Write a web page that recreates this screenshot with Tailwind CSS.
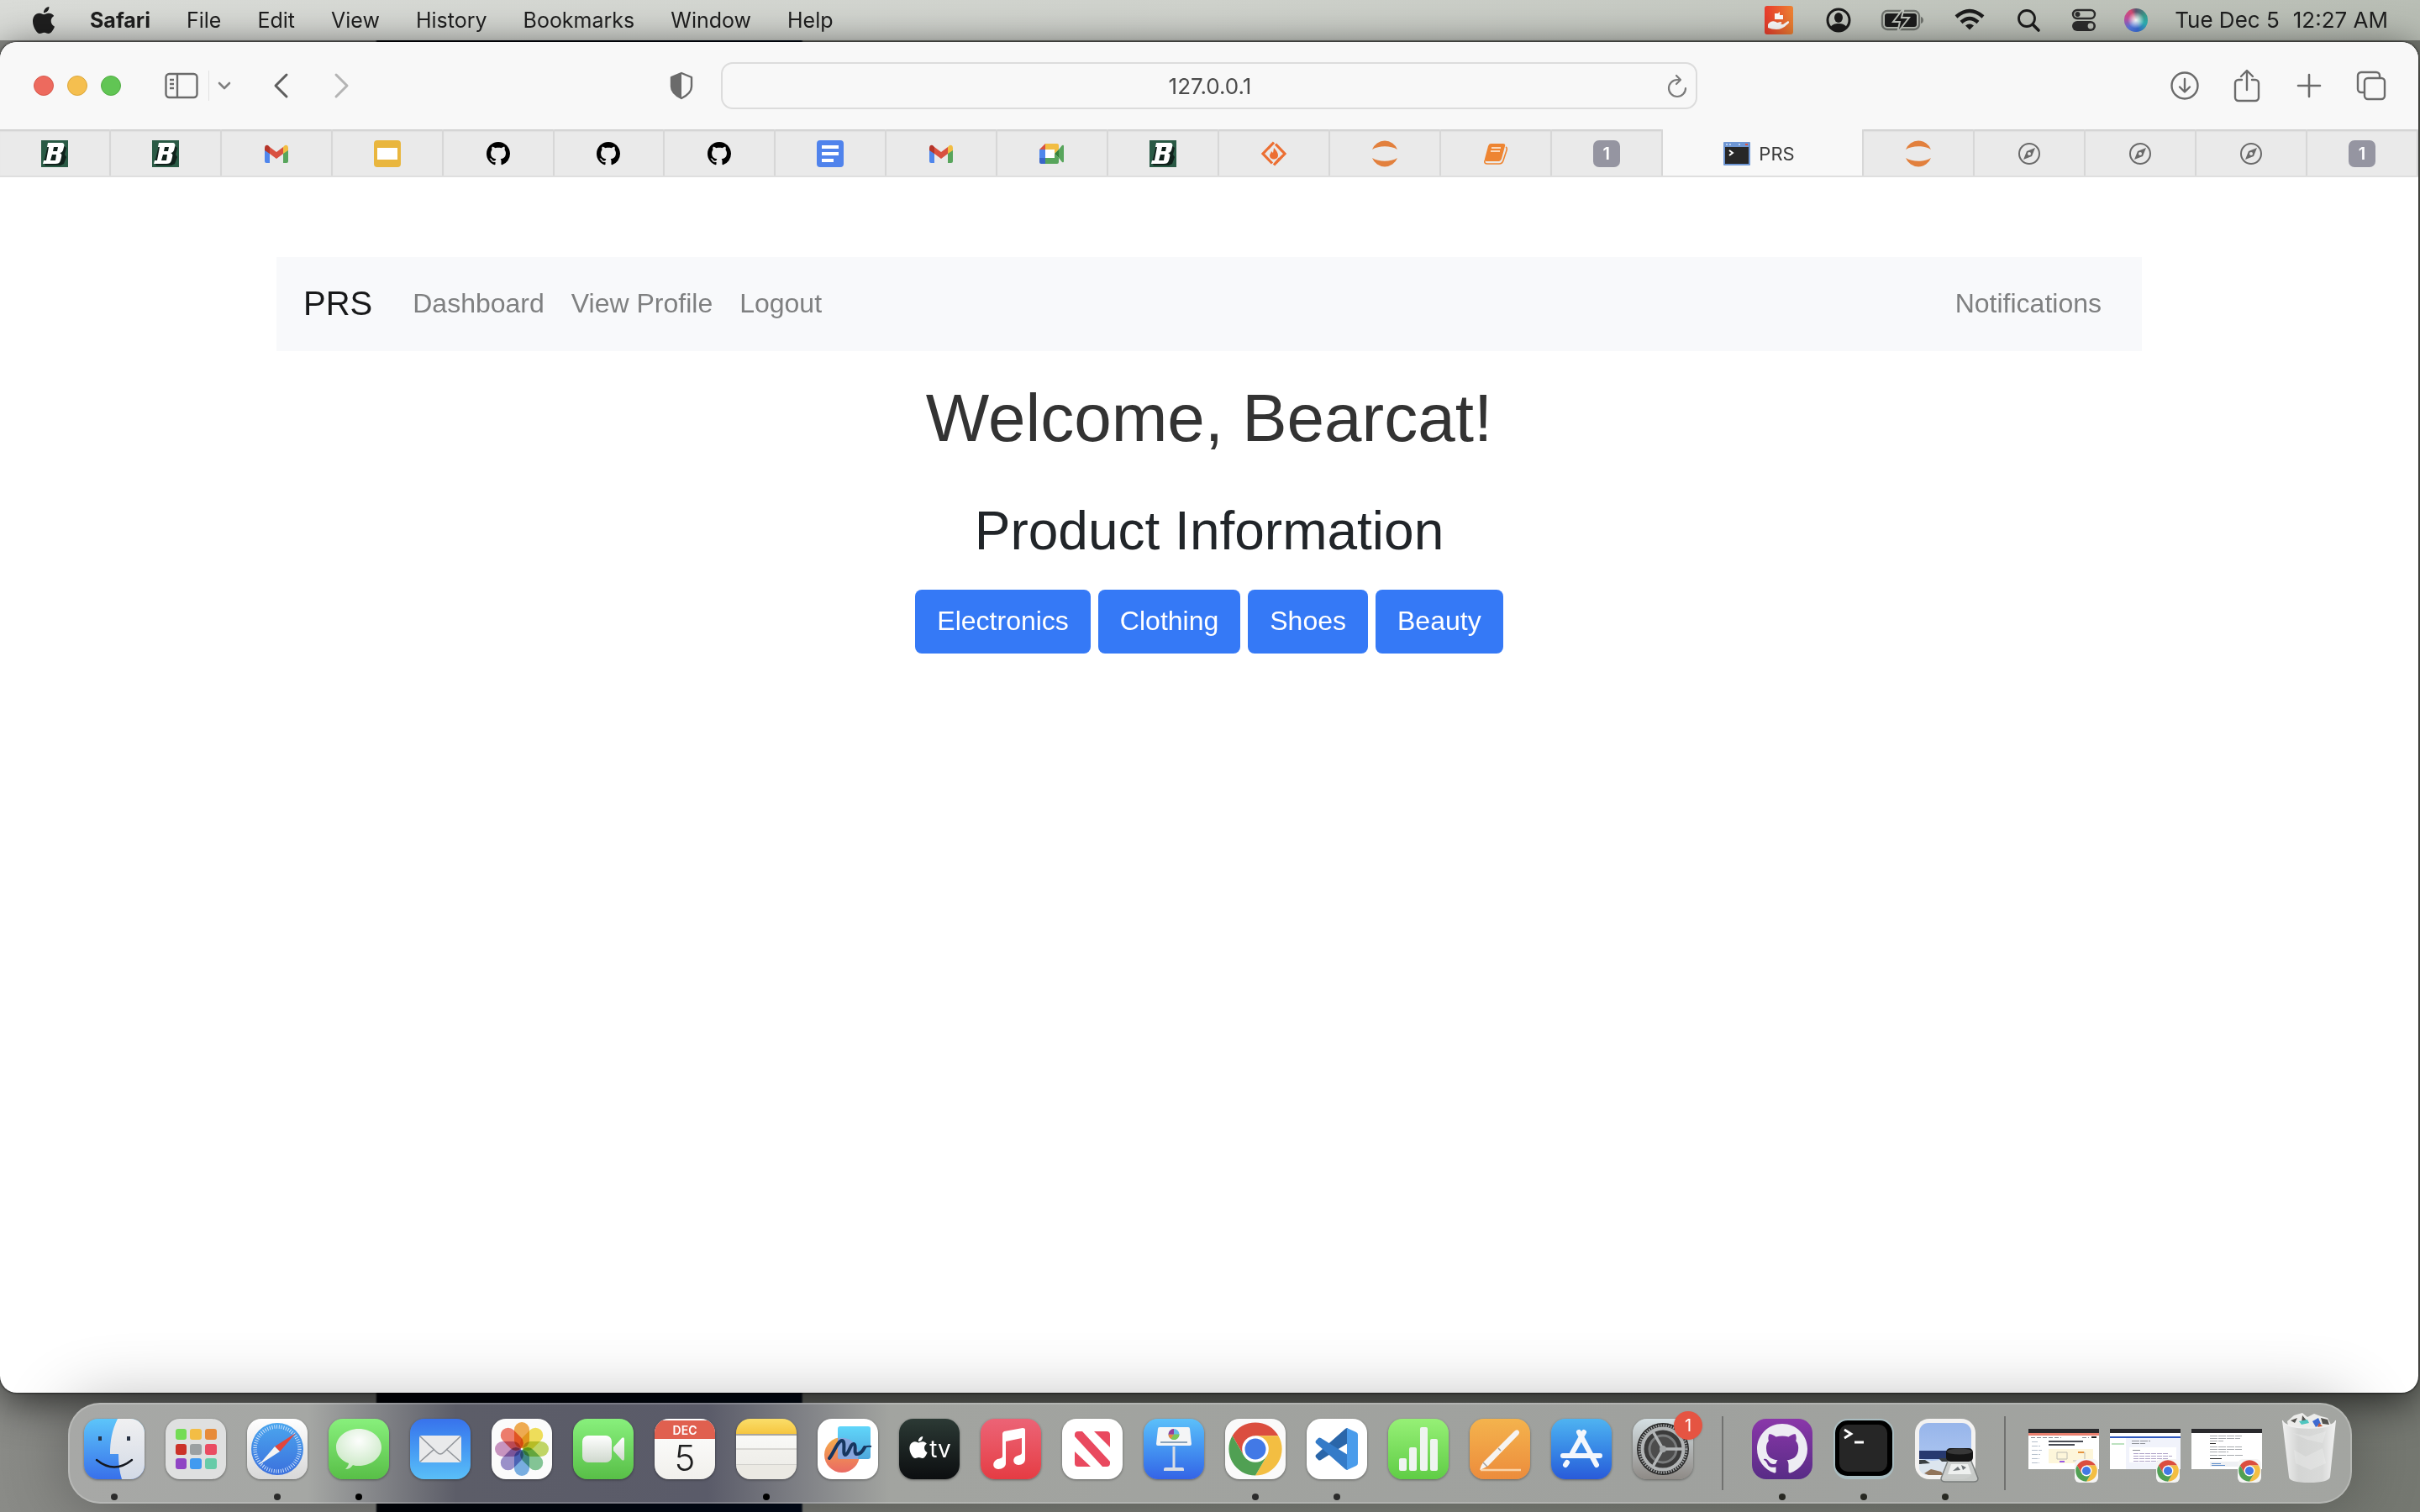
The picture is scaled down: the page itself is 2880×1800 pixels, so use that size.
<!DOCTYPE html>
<html lang="en">
<head>
<meta charset="utf-8">
<title>PRS</title>
<script src="https://cdn.jsdelivr.net/npm/@tailwindcss/browser@4"></script>
</head>
<body class="min-h-screen flex flex-col overflow-hidden bg-[linear-gradient(90deg,#8a8b87_0,#7b7c79_15.5%,#020409_15.6%,#020a18_33.1%,#777973_33.2%,#7d8079_60%,#757871_100%)] font-[Inter,sans-serif] text-[#1f1f1f]">

<svg class="absolute size-0" aria-hidden="true">
  <defs>
    <linearGradient id="gFinder" x1="0" y1="0" x2="0" y2="1"><stop offset="0" stop-color="#5cc5fa"/><stop offset="1" stop-color="#3870ea"/></linearGradient>
    <linearGradient id="gFace" x1="0" y1="0" x2="0" y2="1"><stop offset="0" stop-color="#f0f0f1"/><stop offset="1" stop-color="#d3dae6"/></linearGradient>
    <linearGradient id="gWhite" x1="0" y1="0" x2="0" y2="1"><stop offset="0" stop-color="#ffffff"/><stop offset="1" stop-color="#cfd8cd"/></linearGradient>
    <radialGradient id="gBubble" cx=".5" cy=".3" r=".75"><stop offset="0" stop-color="#fdfefd"/><stop offset="1" stop-color="#c5e6bf"/></radialGradient>
    <linearGradient id="gSafari" x1="0" y1="0" x2="0" y2="1"><stop offset="0" stop-color="#4ba6ee"/><stop offset="1" stop-color="#3b70dd"/></linearGradient>
    <linearGradient id="gSky" x1="0" y1="0" x2="0" y2="1"><stop offset="0" stop-color="#97b5ea"/><stop offset="1" stop-color="#b3cbf3"/></linearGradient>
    <linearGradient id="gOrange" x1="0" y1="0" x2="0" y2="1"><stop offset="0" stop-color="#f5ae4b"/><stop offset="1" stop-color="#ea6a63"/></linearGradient>
    <linearGradient id="gCyan" x1="0" y1="0" x2="0" y2="1"><stop offset="0" stop-color="#60d6fa"/><stop offset="1" stop-color="#4ea7dc"/></linearGradient>
    <linearGradient id="gRec" x1="0" y1="0" x2="1" y2="0"><stop offset="0" stop-color="#ea3b2d"/><stop offset="1" stop-color="#ef8333"/></linearGradient>
    <linearGradient id="gBin" x1="0" y1="0" x2="1" y2="0"><stop offset="0" stop-color="#f1f1f1"/><stop offset=".3" stop-color="#d4d5d4"/><stop offset=".75" stop-color="#d9dad9"/><stop offset="1" stop-color="#f3f3f3"/></linearGradient>
    <symbol id="apple" viewBox="0 0 24 24"><path d="M12.152 6.896c-.948 0-2.415-1.078-3.96-1.04-2.04.027-3.91 1.183-4.961 3.014-2.117 3.675-.546 9.103 1.519 12.09 1.013 1.454 2.208 3.09 3.792 3.039 1.52-.065 2.09-.987 3.935-.987 1.831 0 2.35.987 3.96.948 1.637-.026 2.676-1.48 3.676-2.948 1.156-1.688 1.636-3.325 1.662-3.415-.039-.013-3.182-1.221-3.22-4.857-.026-3.04 2.48-4.494 2.597-4.559-1.429-2.09-3.623-2.324-4.39-2.376-2-.156-3.675 1.09-4.61 1.09zM15.53 3.83c.843-1.012 1.4-2.427 1.245-3.83-1.207.052-2.662.805-3.532 1.818-.78.896-1.454 2.338-1.273 3.714 1.338.104 2.715-.688 3.559-1.701"/></symbol>
    <symbol id="github" viewBox="0 0 16 16"><path d="M8 0C3.58 0 0 3.58 0 8c0 3.54 2.29 6.53 5.47 7.59.4.07.55-.17.55-.38 0-.19-.01-.82-.01-1.49-2.01.37-2.53-.49-2.69-.94-.09-.23-.48-.94-.82-1.13-.28-.15-.68-.52-.01-.53.63-.01 1.08.58 1.23.82.72 1.21 1.87.87 2.33.66.07-.52.28-.87.51-1.07-1.78-.2-3.64-.89-3.64-3.95 0-.87.31-1.59.82-2.15-.08-.2-.36-1.02.08-2.12 0 0 .67-.21 2.2.82.64-.18 1.32-.27 2-.27s1.36.09 2 .27c1.53-1.04 2.2-.82 2.2-.82.44 1.1.16 1.92.08 2.12.51.56.82 1.27.82 2.15 0 3.07-1.87 3.75-3.65 3.95.29.25.54.73.54 1.48 0 1.07-.01 1.93-.01 2.2 0 .21.15.46.55.38A8.01 8.01 0 0 0 16 8c0-4.42-3.58-8-8-8z"/></symbol>
    <symbol id="chrome" viewBox="0 0 48 48">
      <path fill="#db4e3f" d="M24 13H43.05A22 22 0 0 0 4.95 13L14.47 29.5L24 24Z"/>
      <path fill="#f3be42" transform="rotate(120 24 24)" d="M24 13H43.05A22 22 0 0 0 4.95 13L14.47 29.5L24 24Z"/>
      <path fill="#50a053" transform="rotate(240 24 24)" d="M24 13H43.05A22 22 0 0 0 4.95 13L14.47 29.5L24 24Z"/>
      <circle cx="24" cy="24" r="11" fill="#fff"/><circle cx="24" cy="24" r="8.7" fill="#4279e6"/>
    </symbol>
    <symbol id="bearcat" viewBox="0 0 32 32"><rect width="32" height="32" fill="#2a5a45"/><path fill="#10211b" d="M8 6h18l4 3-2 8 2 3-3 8-4 2H5l-2-3z"/><path fill="#fff" fill-rule="evenodd" d="M8 3h16c3 0 4 2 3 5l-1 4c-1 2-2 3-4 3 2 1 3 2 2 5l-1 4c-1 3-3 4-6 4H2l1-4h3L9 8H7zm7 5-1 5h5l1-5zm-2 9-2 7h6l1-7z"/></symbol>
    <symbol id="gmail" viewBox="0 0 32 32"><path fill="#4f86ec" d="M2 9v16q0 2 2 2h4V14z"/><path fill="#58a55c" d="M30 9v16q0 2-2 2h-4V14z"/><path fill="#b5352a" d="M2 10q0-5 4-4l2 2v8l-6-4z"/><path fill="#f2bd42" d="M30 10q0-5-4-4l-2 2v8l6-4z"/><path fill="#d95140" d="M8 8l8 6 8-6v8l-8 6-8-6z"/></symbol>
    <symbol id="jupyter" viewBox="0 0 32 32"><path fill="#e2803d" d="M1 11a16 16 0 0 1 30 0C23 6 9 6 1 11zM1 21a16 16 0 0 0 30 0C23 26 9 26 1 21z"/></symbol>
    <symbol id="compass" viewBox="0 0 32 32"><circle cx="16" cy="16" r="12" fill="none" stroke="#6a6a6a" stroke-width="2"/><path fill="#6a6a6a" fill-rule="evenodd" d="M23 9l-4 10-10 4 4-10zm-7 5a2 2 0 1 0 0 4 2 2 0 0 0 0-4z"/></symbol>
  </defs>
</svg>

<header class="h-12 shrink-0 flex items-center justify-between bg-linear-to-r from-[#dadcd8] via-[#cfd2cc] to-[#b9beb5] pl-9 pr-[38px] text-[25px] leading-[46px]">
  <nav class="flex items-center gap-[43px]" aria-label="Menu bar">
    <button aria-label="Apple menu" class="-mr-1"><svg class="size-8" fill="#1f1f1f"><use href="#apple"/></svg></button>
    <button class="font-bold">Safari</button>
    <button>File</button><button>Edit</button><button>View</button><button>History</button><button>Bookmarks</button><button>Window</button><button>Help</button>
  </nav>
  <div class="flex items-center text-[26px]">
    <svg class="w-[34px] h-[34px] mr-[38px]" viewBox="0 0 34 34"><rect width="34" height="34" rx="3" fill="url(#gRec)"/><path fill="#fff" d="M12 9h4l2-2v4h4v5H12zM4 22c4-5 8-4 11-2l4-1c2 0 2 3-1 3h4l6-4c2 1 1 3-1 4-4 4-8 6-13 6-4 0-7-1-10-2z"/></svg>
    <svg class="size-8 mr-[34px]" viewBox="0 0 32 32"><circle cx="16" cy="16" r="13" fill="none" stroke="#1c1c1c" stroke-width="3"/><ellipse cx="16" cy="13" rx="5" ry="6" fill="#1c1c1c"/><path fill="#1c1c1c" d="M6 25c2-4 6-5 10-5s8 1 10 5c-5 5-15 5-20 0z"/></svg>
    <svg class="w-[52px] h-8 mr-[36px]" viewBox="0 0 52 32"><rect x="2" y="5" width="44" height="22" rx="6" fill="none" stroke="#70736e" stroke-width="2.4"/><path fill="#70736e" d="M48 12c4 1 4 7 0 8z"/><rect x="5" y="8" width="38" height="16" rx="3" fill="#1c1c1c"/><path fill="#1c1c1c" stroke="#c2c6bf" stroke-width="2" d="M28 1L15 18h8l-3 13 14-18h-9z"/></svg>
    <svg class="w-[36px] h-8 mr-[36px]" viewBox="0 0 36 32" fill="none" stroke="#1c1c1c" stroke-width="4.4"><path d="M2 12q16-14 32 0M8 18.500q10-9 20 0"/><path d="M18 27.500l-5-5q5-4 10 0z" fill="#1c1c1c" stroke="none"/></svg>
    <svg class="size-8 mr-[34px]" viewBox="0 0 32 32" fill="none" stroke="#1c1c1c" stroke-width="2.800" stroke-linecap="round"><circle cx="14" cy="14" r="9.500"/><path d="M21 21l7 7" stroke-width="3.600"/></svg>
    <svg class="size-8 mr-[32px]" viewBox="0 0 32 32"><rect x="3" y="4" width="26" height="10" rx="5" fill="none" stroke="#2d2d2d" stroke-width="2.400"/><circle cx="8.500" cy="9" r="3" fill="#2d2d2d"/><rect x="2" y="17" width="28" height="12" rx="6" fill="#2d2d2d"/><circle cx="24" cy="23" r="3.400" fill="#c0c4bc"/></svg>
    <span class="size-[28px] rounded-full mr-[32px] bg-[radial-gradient(circle_at_50%_50%,#fff_0,#ffffff99_22%,transparent_50%),conic-gradient(#5a5670,#3a9c8c_60deg,#2fb5b8_110deg,#3b6fdc_170deg,#5a7ce8_220deg,#c34fa0_280deg,#d44b73_330deg,#5a5670)]"></span>
    <span class="mr-4">Tue Dec 5</span><time>12:27 AM</time>
  </div>
</header>

<div class="flex-1 flex flex-col mt-[2px] mr-[2px] rounded-[20px] overflow-hidden bg-white shadow-[0_0_3px_#000,0_10px_50px_rgba(0,0,0,0.7)]">
  <div class="h-[104px] shrink-0 grid grid-cols-[1fr_1162px_1fr] items-center bg-[#f8f8f8]">
    <div class="flex items-center pl-10 pr-8">
      <div class="flex gap-4 mr-16">
        <button aria-label="Close" class="size-6 rounded-full bg-[#ed6a5e] border border-[#d8594d]"></button>
        <button aria-label="Minimise" class="size-6 rounded-full bg-[#f5bf4f] border border-[#dca73c]"></button>
        <button aria-label="Zoom" class="size-6 rounded-full bg-[#61c554] border border-[#51ad43]"></button>
      </div>
      <button aria-label="Sidebar" class="-ml-3 mr-3"><svg class="w-10 h-8" viewBox="0 0 40 32" fill="none" stroke="#6b6b6b" stroke-width="2.400"><rect x="1.500" y="2" width="37" height="28" rx="4"/><path d="M15 2v28M6 9h5M6 14h5M6 19h5"/></svg></button>
      <span class="w-px h-9 bg-[#e2e2e2] mr-[10px]"></span>
      <button aria-label="Tab groups" class="mr-12"><svg class="w-4 h-4" viewBox="0 0 16 16" fill="none" stroke="#808080" stroke-width="2.600" stroke-linecap="round" stroke-linejoin="round"><path d="M2 5l6 6 6-6"/></svg></button>
      <button aria-label="Back" class="mr-12"><svg class="w-6 h-8" viewBox="0 0 24 32" fill="none" stroke="#5e5e5e" stroke-width="3" stroke-linecap="round" stroke-linejoin="round"><path d="M18 3L5 16l13 13"/></svg></button>
      <button aria-label="Forward"><svg class="w-6 h-8" viewBox="0 0 24 32" fill="none" stroke="#b4b4b4" stroke-width="3" stroke-linecap="round" stroke-linejoin="round"><path d="M5 3l13 13L5 29"/></svg></button>
      <button aria-label="Privacy report" class="ml-auto"><svg class="w-[30px] h-9" viewBox="0 0 30 36"><path fill="none" stroke="#6b6b6b" stroke-width="2.400" stroke-linejoin="round" d="M15 3l12 5v11c0 6-6 11-12 14C9 30 3 25 3 19V8z"/><path fill="#6b6b6b" d="M15 3v30C9 30 3 25 3 19V8z"/></svg></button>
    </div>
    <div class="h-14 flex items-center rounded-[14px] border-2 border-[#dcdcdc] pt-px pl-10 pr-1.5">
      <input aria-label="Address" value="127.0.0.1" class="flex-1 min-w-0 bg-transparent text-center text-[26px] text-[#4a4a4a]">
      <button aria-label="Reload"><svg class="w-8 h-8" viewBox="0 0 32 32" fill="none" stroke="#7a7a7a" stroke-width="2.200" stroke-linecap="round" stroke-linejoin="round"><path d="M19 8h-3a10 10 0 1 0 10 10M15 3l5 5-5 5"/></svg></button>
    </div>
    <div class="flex items-center justify-end gap-[38px] pr-[38px]">
      <button aria-label="Downloads"><svg class="size-9" viewBox="0 0 36 36" fill="none" stroke="#6b6b6b" stroke-width="2.400" stroke-linecap="round" stroke-linejoin="round"><circle cx="18" cy="18" r="15.500"/><path d="M18 10v15M12 19.500l6 6 6-6"/></svg></button>
      <button aria-label="Share"><svg class="w-9 h-10" viewBox="0 0 36 40" fill="none" stroke="#6b6b6b" stroke-width="2.400" stroke-linecap="round" stroke-linejoin="round"><path d="M12 13H8a4 4 0 0 0-4 4v17a4 4 0 0 0 4 4h20a4 4 0 0 0 4-4V17a4 4 0 0 0-4-4h-4M18 25V3M11 9l7-7 7 7"/></svg></button>
      <button aria-label="New tab"><svg class="size-9" viewBox="0 0 36 36" fill="none" stroke="#6b6b6b" stroke-width="2.600" stroke-linecap="round"><path d="M18 5v26M5 18h26"/></svg></button>
      <button aria-label="Tab overview"><svg class="size-9" viewBox="0 0 36 36" fill="none" stroke="#6b6b6b" stroke-width="2.400" stroke-linejoin="round"><path d="M10 26H6a4 4 0 0 1-4-4V6a4 4 0 0 1 4-4h18a4 4 0 0 1 4 4v3"/><rect x="10" y="9" width="24" height="25" rx="4"/></svg></button>
    </div>
  </div>

  <nav aria-label="Tabs" class="h-[57px] shrink-0 grid grid-cols-[repeat(15,minmax(0,132fr))_minmax(0,240fr)_repeat(5,minmax(0,132fr))] border-b-2 border-[#dfdfdf] bg-[#eaeaea] [&>a]:flex [&>a]:items-center [&>a]:justify-center [&>a]:pt-[3px] [&>a]:border-r-2 [&>a]:border-[#d7d7d7] [&>a:not([aria-current])]:shadow-[inset_0_3px_2px_-1px_#cfcfcf]">
    <a href="#" aria-label="Bearcat"><svg class="size-8"><use href="#bearcat"/></svg></a>
    <a href="#" aria-label="Bearcat"><svg class="size-8"><use href="#bearcat"/></svg></a>
    <a href="#" aria-label="Gmail"><svg class="size-8"><use href="#gmail"/></svg></a>
    <a href="#" aria-label="Slides"><svg class="size-8" viewBox="0 0 32 32"><rect width="32" height="32" rx="4" fill="#e9b63e"/><rect x="4" y="9" width="24" height="14" fill="#fff"/></svg></a>
    <a href="#" aria-label="GitHub"><svg class="size-7"><use href="#github"/></svg></a>
    <a href="#" aria-label="GitHub"><svg class="size-7"><use href="#github"/></svg></a>
    <a href="#" aria-label="GitHub"><svg class="size-7"><use href="#github"/></svg></a>
    <a href="#" aria-label="Docs"><svg class="size-8" viewBox="0 0 32 32"><rect width="32" height="32" rx="4" fill="#5083ec"/><path fill="#fff" d="M6 6h20v4H6zM6 14h20v4H6zM6 22h14v4H6z"/></svg></a>
    <a href="#" aria-label="Gmail"><svg class="size-8"><use href="#gmail"/></svg></a>
    <a href="#" aria-label="Meet"><svg class="size-8" viewBox="0 0 32 32"><path fill="#fff" d="M8 11h11v10H8z"/><path fill="#f2bd42" d="M8 4h14q2 0 2 2v5l-5 5v-5H8z"/><path fill="#d95140" d="M8 4v7H1z"/><path fill="#4f86ec" d="M1 11h7v10H1z"/><path fill="#3a66c8" d="M1 21h7v7H3q-2 0-2-2z"/><path fill="#58a55c" d="M8 21h11v-5l5 5v5q0 2-2 2H8zM24 11l4-5q2-1 2 1v18q0 2-2 1l-4-5z"/><path fill="#36803a" d="M19 16l5-5v10z"/></svg></a>
    <a href="#" aria-label="Bearcat"><svg class="size-8"><use href="#bearcat"/></svg></a>
    <a href="#" aria-label="Diamond"><svg class="size-8" viewBox="0 0 32 32"><path fill="none" stroke="#ec6f33" stroke-width="3.200" d="M14 4.500L3 16l11 11.500M18 4.500L29 16 18 27.500M16 2.500L9 10M16 29.500l7-8"/><path fill="#ec6f33" d="M16 9c4 4 5 7 5 9 0 6-10 6-10 0 0-2 2-3 2-5l2 2z"/></svg></a>
    <a href="#" aria-label="Jupyter"><svg class="size-8"><use href="#jupyter"/></svg></a>
    <a href="#" aria-label="Notebook"><svg class="size-8" viewBox="0 0 32 32"><path fill="#ee8532" d="M10 4h15q3 0 2 3l-4 15q-1 3-3 3H5q-3 0-2-3L7 7q1-3 3-3z"/><path fill="none" stroke="#ee8532" stroke-width="1.600" d="M28 8q2 1 1 4l-4 12q-1 4-5 4H6q-4 0-3-4"/><path stroke="#fbd9bb" stroke-width="1.800" d="M11 9h11M10 13h11"/></svg></a>
    <a href="#" aria-label="Tab 15"><span class="size-8 rounded-[7px] bg-[#9595a1] text-white text-[20px] font-semibold leading-8 text-center">1</span></a>
    <a href="#" aria-current="page" class="gap-[10px] bg-[#f8f8f8] pr-2 text-[22px] text-[#3c3c3c]"><svg class="w-8 h-7" viewBox="0 0 32 28"><rect width="32" height="28" rx="1" fill="#6f97d4"/><path fill="#b9cff0" d="M3 2h2v2H3zM7 2h2v2H7zM18 2h2v2h-2z"/><path fill="#e0523f" d="M26 2h3v2h-3z"/><rect x="2" y="6" width="28" height="20" fill="#272727"/><path d="M7 10l4 3-4 3" fill="none" stroke="#fff" stroke-width="2"/></svg><span>PRS</span></a>
    <a href="#" aria-label="Jupyter"><svg class="size-8"><use href="#jupyter"/></svg></a>
    <a href="#" aria-label="Start page"><svg class="size-8"><use href="#compass"/></svg></a>
    <a href="#" aria-label="Start page"><svg class="size-8"><use href="#compass"/></svg></a>
    <a href="#" aria-label="Start page"><svg class="size-8"><use href="#compass"/></svg></a>
    <a href="#" aria-label="Tab 21"><span class="size-8 rounded-[7px] bg-[#9595a1] text-white text-[20px] font-semibold leading-8 text-center">1</span></a>
  </nav>

  <main class="flex-1 w-full max-w-[2220px] mx-auto pt-[95px] font-['Liberation_Sans',Arial,sans-serif] text-[32px] leading-[48px] text-center">
    <nav class="h-28 flex items-center bg-[#f8f9fb] px-8 pb-[2px] text-[#7f8081]">
      <a href="#" class="mr-8 text-[40px] text-[#18191a]">PRS</a>
      <a href="#" class="px-4">Dashboard</a>
      <a href="#" class="px-4">View Profile</a>
      <a href="#" class="px-4">Logout</a>
      <a href="#" class="px-4 ml-auto">Notifications</a>
    </nav>
    <h1 class="mt-8 mb-12 text-[80px] leading-[96px] text-[#333]">Welcome, Bearcat!</h1>
    <h2 class="mb-8 text-[64px] leading-[76px] text-[#212529]">Product Information</h2>
    <div class="flex justify-center gap-[9px] text-white [&>button]:h-[76px] [&>button]:px-[26px] [&>button]:pb-[2px] [&>button]:rounded-lg [&>button]:bg-[#3579f6]">
      <button>Electronics</button><button>Clothing</button><button>Shoes</button><button>Beauty</button>
    </div>
  </main>
</div>

<footer class="relative shrink-0 flex justify-center pt-3 pb-[10px]">
  <div class="h-[120px] flex items-start rounded-[38px] border-2 border-white/20 bg-[linear-gradient(90deg,#a7a8a6_0,#a5a7a4_10.5%,#5c5d68_17%,#5a5b69_28%,#a2a4a0_36%,#9fa19e_70%,#a3a5a1_100%)] bg-origin-border px-[17px] pt-[17px] shadow-[0_0_80px_rgba(0,0,0,0.3)] [&_button]:relative [&_button]:shrink-0 [&_svg]:block">
    <div class="flex gap-[25px] [&>button]:size-[72px] [&>button]:rounded-[17px] [&>button]:shadow-[0_1px_3px_rgba(0,0,0,0.4)]">
      <button aria-label="Finder"><svg viewBox="0 0 72 72"><defs><clipPath id="tile"><rect width="72" height="72" rx="17"/></clipPath></defs><g clip-path="url(#tile)"><rect width="72" height="72" fill="url(#gFinder)"/><path fill="url(#gFace)" d="M40 0C33 14 31 27 31 42h10c0 11 1 21 4 30h27V0z"/></g><path d="M19 21v5M53 21v5" stroke="#273142" stroke-width="4"/><path d="M15 49q21 17 42 0" fill="none" stroke="#15181f" stroke-width="2.400" stroke-linecap="round"/></svg><span class="absolute left-8 top-[89px] size-2 rounded-full bg-[#2b2b2b]"></span></button>
      <button aria-label="Launchpad" class="bg-[#dfe0e0]"><svg viewBox="0 0 72 72"><g><rect x="12" y="12" width="13" height="13" rx="3" fill="#74dc55"/><rect x="29" y="12" width="14" height="13" rx="3" fill="#f3bd45"/><rect x="47" y="12" width="14" height="13" rx="3" fill="#e78b39"/><rect x="12" y="30" width="13" height="13" rx="3" fill="#cb3228"/><rect x="29" y="30" width="14" height="13" rx="3" fill="#9ba0a2"/><rect x="47" y="30" width="14" height="13" rx="3" fill="#ea4c62"/><rect x="12" y="47" width="13" height="13" rx="3" fill="#9045c4"/><rect x="29" y="47" width="14" height="13" rx="3" fill="#409af0"/><rect x="47" y="47" width="14" height="13" rx="3" fill="#67cba8"/></g></svg></button>
      <button aria-label="Safari" class="bg-linear-to-b from-white to-[#d8d8d8]"><svg viewBox="0 0 72 72"><circle cx="36" cy="36" r="31" fill="url(#gSafari)"/><circle cx="36" cy="36" r="26.500" fill="none" stroke="#d5e6fa" stroke-width="4.500" stroke-dasharray=".9 1.900"/><path fill="#e2463c" d="M58 17L33 33l6 6z"/><path fill="#f4f4f4" d="M14 55l19-22 6 6z"/></svg><span class="absolute left-8 top-[89px] size-2 rounded-full bg-[#2b2b2b]"></span></button>
      <button aria-label="Messages" class="bg-linear-to-b from-[#88f07c] to-[#58bf47]"><svg viewBox="0 0 72 72"><path fill="url(#gBubble)" d="M36 12c15 0 27 10 27 22S51 56 36 56c-3 0-5 0-7-1-2 3-5 5-9 5 2-2 4-5 4-7C15 50 9 43 9 34c0-12 12-22 27-22z"/></svg><span class="absolute left-8 top-[89px] size-2 rounded-full bg-black"></span></button>
      <button aria-label="Mail" class="bg-linear-to-b from-[#3872ec] to-[#5abff8]"><svg viewBox="0 0 72 72"><rect x="11" y="20" width="50" height="32" rx="3" fill="#e9eaeb"/><path d="M12 51l17-15M60 51L43 36M12 21l20 19q4 4 8 0l20-19" fill="none" stroke="#92969b" stroke-width="1.600"/></svg></button>
      <button aria-label="Photos" class="bg-[#fbfbfb]"><svg viewBox="0 0 72 72"><g class="[&>rect]:mix-blend-multiply"><rect x="27" y="4" width="18" height="31" rx="9" fill="#f1a23a" opacity=".88"/><rect x="27" y="4" width="18" height="31" rx="9" fill="#f0dc3e" opacity=".85" transform="rotate(45 36 36)"/><rect x="27" y="4" width="18" height="31" rx="9" fill="#b9d24d" opacity=".85" transform="rotate(90 36 36)"/><rect x="27" y="4" width="18" height="31" rx="9" fill="#6fbd85" opacity=".85" transform="rotate(135 36 36)"/><rect x="27" y="4" width="18" height="31" rx="9" fill="#62a2df" opacity=".85" transform="rotate(180 36 36)"/><rect x="27" y="4" width="18" height="31" rx="9" fill="#8c7fc4" opacity=".85" transform="rotate(225 36 36)"/><rect x="27" y="4" width="18" height="31" rx="9" fill="#c183b8" opacity=".85" transform="rotate(270 36 36)"/><rect x="27" y="4" width="18" height="31" rx="9" fill="#ec5d49" opacity=".8" transform="rotate(315 36 36)"/></g></svg></button>
      <button aria-label="FaceTime" class="bg-linear-to-b from-[#88f07c] to-[#58bf47]"><svg viewBox="0 0 72 72"><rect x="11" y="20" width="35" height="32" rx="7" fill="url(#gWhite)"/><path fill="url(#gWhite)" d="M48 34l10-11q3-2 3 2v22q0 4-3 2L48 38z"/></svg></button>
      <button aria-label="Calendar" class="overflow-hidden bg-linear-to-b from-white to-[#f1f0ec]"><span class="block h-[22px] bg-[#e0604f] text-white text-[14px] font-semibold leading-[24px]">DEC</span><span class="block text-[42px] font-light leading-[46px] text-[#1f1f1f]">5</span></button>
      <button aria-label="Notes" class="bg-[linear-gradient(#fade6a_0,#f6c640_18px,#aaa69c_18px,#aaa69c_20px,#f9f9f7_20px,#f6f6f3_35px,#d8d7d3_35px,#d8d7d3_37px,#f2f1ed_37px,#efeeea_54px,#d2d1cd_54px,#d2d1cd_55px,#ebe9e3_55px)]"><span class="absolute left-8 top-[89px] size-2 rounded-full bg-black"></span></button>
      <button aria-label="Freeform" class="bg-white"><svg viewBox="0 0 72 72"><circle cx="29" cy="43" r="21" fill="url(#gOrange)"/><rect x="24" y="9" width="39" height="39" rx="3" fill="url(#gCyan)"/><path fill="#88a6dd" d="M24 23q20-3 25 18l-1 7H27q-3 0-3-3z"/><path d="M14 47c5-6 10-21 15-21s0 17 4 17 6-14 10-13-1 12 4 12 8-6 9-8" fill="none" stroke="#17365f" stroke-width="4" stroke-linecap="round"/><path d="M56 34q4-2 8-1" stroke="#17365f" stroke-width="2" fill="none"/></svg></button>
      <button aria-label="TV" class="flex items-center justify-center bg-linear-to-b from-[#2c3a35] to-[#0c0e10] text-white"><svg class="size-[26px] -mt-1" fill="#fff"><use href="#apple"/></svg><span class="text-[28px] leading-8">tv</span></button>
      <button aria-label="Music" class="bg-linear-to-b from-[#ec6376] to-[#e53b43]"><svg viewBox="0 0 72 72"><path fill="#fff" d="M26 18q0-2 2-3l22-4q3 0 3 2v35c0 4-3 7-8 7-7 0-8-9-1-11 4-1 5-2 5-4V23l-19 4v26c0 4-4 7-9 7-7 0-8-9-1-12 4-1 6-1 6-4z"/></svg></button>
      <button aria-label="News" class="bg-white"><svg viewBox="0 0 72 72"><path fill="#e9495f" d="M15 19q0-4 4-4h5l33 36v2q0 4-4 4h-5L15 21zM38 15h15q4 0 4 4v15zM15 39l19 18H19q-4 0-4-4z"/></svg></button>
      <button aria-label="Keynote" class="bg-linear-to-b from-[#5cc0fa] to-[#3563e6]"><svg viewBox="0 0 72 72"><path fill="#f4f5f6" d="M19 10h34q2 0 2 2l2 18q0 2-2 2H17q-2 0-2-2l2-18q0-2 2-2z"/><path stroke="#8ba3ba" stroke-width="2" d="M20 28h32"/><circle cx="36" cy="18.500" r="6.500" fill="#63bde8"/><path fill="#7cc858" d="M36 18.500h6.500a6.500 6.500 0 0 1-10 5.500z"/><path fill="#e88a3c" d="M36 18.500l-3.500 5.500a6.500 6.500 0 0 1-3-5.500z"/><path fill="#96409a" d="M36 18.500h-6.500A6.500 6.500 0 0 1 36 12z"/><path fill="#d9dde4" d="M34.500 33h3v26h-3zM26 58h20q2 0 2 2v2H24v-2q0-2 2-2z"/></svg></button>
      <button aria-label="Chrome" class="bg-[#fafafa]"><svg viewBox="0 0 72 72"><use href="#chrome" x="1.500" y="1.500" width="69" height="69"/></svg><span class="absolute left-8 top-[89px] size-2 rounded-full bg-[#2b2b2b]"></span></button>
      <button aria-label="Visual Studio Code" class="bg-white"><svg viewBox="0 0 72 72"><path fill="#2a66a9" d="M49 11v18L17 49q-2 1-3 0l-3-3q-1-2 0-3L46 12q1-1 3-1z"/><path fill="#347bc8" d="M49 61V43L17 23q-2-1-3 0l-3 3q-1 2 0 3l35 31q1 1 3 1z"/><path fill="#4a9ceb" d="M48 11l11 5q2 1 2 3v34q0 2-2 3l-11 5z"/></svg><span class="absolute left-8 top-[89px] size-2 rounded-full bg-[#2b2b2b]"></span></button>
      <button aria-label="Numbers" class="bg-linear-to-b from-[#96f076] to-[#5fcd45]"><svg viewBox="0 0 72 72" fill="#eff4f0"><rect x="13" y="47" width="9" height="15" rx="2"/><rect x="25" y="34" width="9" height="28" rx="2"/><rect x="38" y="10" width="9" height="52" rx="2"/><rect x="50" y="24" width="9" height="38" rx="2"/></svg></button>
      <button aria-label="Pages" class="bg-linear-to-b from-[#f4b34d] to-[#ec8c3c]"><svg viewBox="0 0 72 72"><path stroke="#fad3a6" stroke-width="2.400" d="M13 61h48"/><path fill="#f6f4f2" d="M53 15q3-3 5-1t0 5L22 56q-5 3-10 5 1-5 4-9z"/><path stroke="#a5a09b" d="M34 35l3 3M16 52l5 5" stroke-width="1.500"/></svg></button>
      <button aria-label="App Store" class="bg-linear-to-b from-[#4fb3f1] to-[#2a5ad9]"><svg viewBox="0 0 72 72" fill="none" stroke="#f4f7fc" stroke-width="6" stroke-linecap="round"><path d="M14 44h44M33 16l21 39M39 16L25 41M19 52l-2 3"/></svg></button>
      <button aria-label="System Settings" class="bg-linear-to-b from-[#d5e0e4] to-[#8e8a86]"><svg viewBox="0 0 72 72" fill="none"><circle cx="36" cy="36" r="31" fill="#2a2a2a"/><circle cx="36" cy="36" r="28" stroke="#a4a7a8" stroke-width="3" stroke-dasharray="1.500 1.500"/><circle cx="36" cy="36" r="24.500" fill="#3b3b3b" stroke="#b2b5b6" stroke-width="4"/><circle cx="36" cy="36" r="16" fill="#4c4c4c" stroke="#797b7c" stroke-width="3"/><path d="M36 36h24M36 36L24 15M36 36L24 57" stroke="#b2b5b6" stroke-width="3.500"/><circle cx="36" cy="36" r="4" fill="#a4a7a8"/></svg><span class="absolute -right-[11px] -top-[9px] size-[34px] rounded-full bg-[#e55442] text-white text-[20px] leading-[34px] shadow">1</span></button>
    </div>
    <span class="mx-[34px] -mt-[3px] h-[88px] w-[2px] bg-[#717270]"></span>
    <div class="flex gap-[25px] [&>button]:size-[72px] [&>button]:rounded-[17px]">
      <button aria-label="GitHub Desktop" class="bg-linear-to-b from-[#8a37a9] to-[#582b86]"><svg viewBox="0 0 72 72"><use href="#github" x="6" y="6" width="60" height="60" fill="#edecf3"/></svg><span class="absolute left-8 top-[89px] size-2 rounded-full bg-[#272822]"></span></button>
      <button aria-label="Terminal" class="border-2 border-b-4 border-[#a9bcc0] bg-black"><svg viewBox="0 0 68 66"><rect x="5" y="5" width="57" height="56" rx="10" fill="#262626"/><path d="M11 11l8 5-8 5M23 26h11" fill="none" stroke="#fff" stroke-width="2.800"/></svg><span class="absolute left-[30px] top-[87px] size-2 rounded-full bg-[#272822]"></span></button>
      <button aria-label="Preview" class="bg-[#f3f2f1]"><svg class="overflow-visible" viewBox="0 0 72 72"><rect x="5" y="5" width="62" height="62" rx="11" fill="url(#gSky)"/><path fill="#27396f" d="M5 38h62v10H5z"/><path fill="#dce5ee" d="M5 48l15 2 20-2 27 2v10q-2 7-10 7H16q-8 0-11-7z"/><path fill="#3a3f42" d="M5 49l7 0 6 4-13 1zM28 47l20 0v4H32z"/><path fill="#91745a" d="M11 65l8-5 12 3 3 4H16z"/><path fill="#c9ccca" stroke="#777b7a" stroke-width="1.500" opacity=".93" d="M40 48h26l9 23q0 4-5 4H36q-5 0-5-4z"/><path fill="#eef0ef" d="M43 54h20l4 12H39z"/><path fill="#6d7376" d="M45 62l6-5 3 4zM55 55l6 3-4 3z"/><rect x="37" y="35" width="32" height="16" rx="5" fill="#151515"/><ellipse cx="53" cy="39" rx="15" ry="3.500" fill="#383838"/></svg><span class="absolute left-8 top-[89px] size-2 rounded-full bg-[#272822]"></span></button>
    </div>
    <span class="ml-[34px] mr-[27px] -mt-[3px] h-[88px] w-[2px] bg-[#717270]"></span>
    <div class="flex gap-[13px] pt-3 [&>button]:w-[84px]">
      <button aria-label="UML class diagram window"><svg class="w-[84px] h-12" viewBox="0 0 84 48"><path fill="#fff" d="M0 0h84v48H0z"/><path fill="#29292c" d="M0 0h84v5H0z"/><path fill="#e9806f" d="M0 5h84v3H0z"/><path stroke="#8a8a92" stroke-width="1" stroke-dasharray="5 2" d="M3 10.500h36M64 10.500h8"/><path fill="#222" d="M75 9h6v2h-6z"/><path fill="#4a4d55" d="M24 14h41v2H24zM24 18h31v2H24z"/><path stroke="#b6c0cc" stroke-dasharray="7 1" d="M4 15.500h7M4 20.500h10M4 25.500h12M4 30.500h10M4 35.500h9M4 40.500h9"/><path fill="#fdf6da" d="M24 24h53v17H24z"/><path stroke="#bdbcb4" fill="none" d="M34 28h12v8H34zM60 28h7v10h-14"/><path fill="#e6943e" d="M59 27h7v2h-7z"/><path fill="#9a5ae6" d="M37 38h6v2h-6z"/></svg><svg class="absolute left-[55px] top-[36px] size-7 rounded-md bg-[#f4f4f4]"><use href="#chrome"/></svg></button>
      <button aria-label="Code review window"><svg class="w-[84px] h-12" viewBox="0 0 84 48"><path fill="#f1f3fb" d="M0 0h84v48H0z"/><path fill="#29292c" d="M0 0h84v5H0z"/><path fill="#fff" d="M0 5h84v4H0zM0 11h19v37H0zM23 22h56v18H23z"/><path fill="#2f58bd" d="M0 9h84v2H0z"/><path fill="#bde2c0" d="M2 17h15v2H2z"/><path stroke="#8f9299" stroke-dasharray="9 1" d="M26 14.500h22M26 17.500h16M27 25.500h10"/><path stroke="#b0a4c8" stroke-dasharray="6 1" d="M28 29.500h42M28 32.500h46M28 35.500h42M28 38.500h30"/></svg><svg class="absolute left-[55px] top-[36px] size-7 rounded-md bg-[#f4f4f4]"><use href="#chrome"/></svg></button>
      <button aria-label="Document window"><svg class="w-[84px] h-12" viewBox="0 0 84 48"><path fill="#fff" d="M0 0h84v48H0z"/><path fill="#29292c" d="M0 0h84v5H0z"/><path stroke="#a9acb0" stroke-dasharray="9 1" d="M22 8.500h38M22 11.500h36M22 14.500h16M22 21.500h38M22 24.500h38M22 27.500h22M22 31.500h40"/><path fill="#2f2f2f" d="M22 17h7v1h-7zM22 35h14v1H22z"/><path fill="#eef0f3" d="M22 39h40v6H22z"/><path stroke="#5f8dc9" d="M24 41.500h11M24 43.500h16"/></svg><svg class="absolute left-[55px] top-[36px] size-7 rounded-md bg-[#f4f4f4]"><use href="#chrome"/></svg></button>
    </div>
    <button aria-label="Trash" class="ml-6 -mt-[7px]"><svg class="w-16 h-[84px]" viewBox="0 0 64 84"><path fill="#ececea" d="M6 10l8-7 10-3 6 5 8-4 8 3 8 2 4 8-4 8H8z"/><path fill="#54534f" d="M10 9l8-3-3 6zM24 3l5 6-6 3zM46 6l8 2 2 6-8-1z"/><path fill="#3e6ad0" d="M36 10l7-4 3 7-6 4z"/><path fill="#4fc6c0" d="M20 10l10-2 2 4-9 2z"/><path fill="#c65a38" d="M44 12l4 4-6 1z"/><path fill="url(#gBin)" d="M0 9q4 9 32 9t32-9l-7 67q-1 7-25 7T8 76z"/><path fill="none" stroke="#f0f0f0" stroke-width="1.500" d="M0 9q4 9 32 9t32-9"/><path fill="#fff" opacity=".22" d="M12 24l20 4 20-6-4 14-18-4zM14 44l14 8 20-10 4 18-18 8-18-8z"/></svg></button>
  </div>
</footer>
</body>
</html>
